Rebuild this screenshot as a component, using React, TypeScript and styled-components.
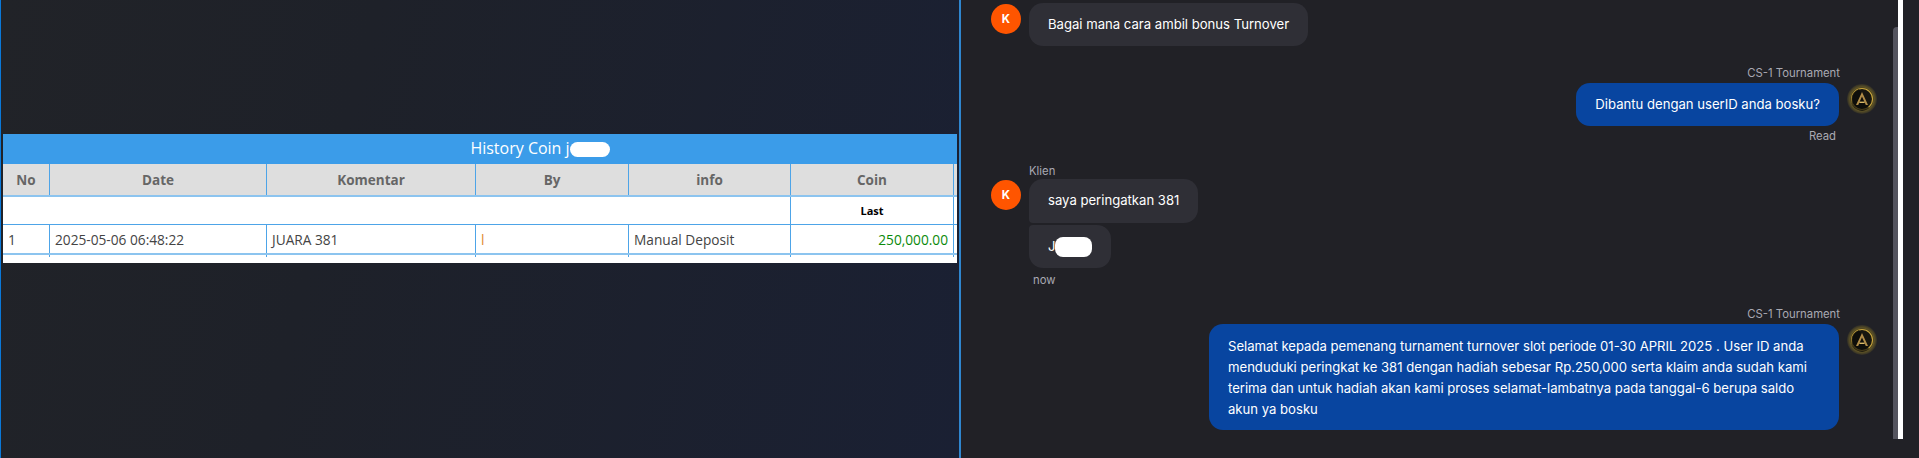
import React from "react";
import styled, { createGlobalStyle } from "styled-components";

const GlobalStyle = createGlobalStyle`
  html, body {
    margin: 0;
    padding: 0;
    background: #212126;
    overflow: hidden;
  }
  * {
    box-sizing: border-box;
  }
`;

const Page = styled.div`
  width: 1919px;
  height: 458px;
  display: flex;
`;

const LeftPane = styled.div`
  width: 961px;
  height: 458px;
  padding: 134px 3px 0 3px;
  border-left: 1px solid #0a78d8;
  border-right: 2px solid #2f86cf;
  margin: 0;
  background: linear-gradient(105deg, #212328 0%, #1e2129 35%, #1a2033 100%);
`;

const Sheet = styled.div`
  width: 954px;
  margin-left: -1px;
  height: 129px;
  background: #fff;
  font-family: "Open Sans", "Noto Sans", sans-serif;
`;

const TitleBar = styled.div`
  height: 30px;
  padding-left: 120px;
  background: #3b9ce9;
  color: #fff;
  font-size: 16px;
  line-height: 29px;
  text-align: center;
`;

const Blur = styled.span<{ $w: number; $h: number }>`
  display: inline-block;
  width: ${(p) => p.$w}px;
  height: ${(p) => p.$h}px;
  border-radius: 8px;
  background: #fff;
  vertical-align: middle;
`;

const Row = styled.div<{ $h: number; $rule?: string }>`
  display: grid;
  grid-template-columns: 46px 217px 209px 153px 162px 163px 4px;
  height: ${(p) => p.$h}px;
  border-bottom: ${(p) => p.$rule || "none"};
`;

const Cell = styled.div<{ $line?: boolean; $span?: number }>`
  grid-column: span ${(p) => p.$span || 1};
  border-left: ${(p) => (p.$line ? "1px solid #4da4e8" : "none")};
  overflow: hidden;
  white-space: nowrap;
`;

const Head = styled(Cell)`
  background: #dedede;
  color: #666;
  font-size: 13.5px;
  font-weight: 700;
  line-height: 32px;
  text-align: center;
`;

const Body = styled(Cell)<{ $align?: string; $color?: string }>`
  padding: 0 5px;
  color: ${(p) => p.$color || "#444"};
  font-size: 13.7px;
  line-height: 30px;
  text-align: ${(p) => p.$align || "left"};
`;

const LastLabel = styled(Cell)`
  color: #000;
  font-size: 11px;
  font-weight: 700;
  line-height: 27px;
  text-align: center;
`;

const ChatPane = styled.div`
  width: 932px;
  height: 458px;
  padding: 3px 16px 0 30px;
  display: flex;
  flex-direction: column;
  font-family: Inter, "Noto Sans", sans-serif;
  background: #212126;
`;

const Line = styled.div<{ $side: "in" | "out"; $top?: number }>`
  display: flex;
  gap: 8px;
  align-items: flex-start;
  justify-content: ${(p) => (p.$side === "out" ? "flex-end" : "flex-start")};
  margin-top: ${(p) => p.$top || 0}px;
`;

const Avatar = styled.div`
  flex: none;
  width: 30px;
  height: 30px;
  margin-top: 1px;
  border-radius: 50%;
  background: #ff5500;
  color: #fff;
  font-size: 11.5px;
  font-weight: 700;
  line-height: 30px;
  text-align: center;
`;

const LogoWrap = styled.div`
  flex: none;
  width: 30px;
  height: 30px;
  margin-top: 1px;
`;

const Stack = styled.div`
  display: flex;
  flex-direction: column;
  gap: 2px;
`;

const Bubble = styled.div<{ $kind: "in" | "out"; $first?: boolean; $last?: boolean }>`
  padding: 11px 19px;
  min-height: ${(p) => (p.$first ? 44 : 43)}px;
  border-radius: 14px;
  border-bottom-left-radius: ${(p) => (p.$first ? "4px" : "14px")};
  border-top-left-radius: ${(p) => (p.$last ? "4px" : "14px")};
  background: ${(p) => (p.$kind === "out" ? "#0845a0" : "#2f2f36")};
  color: #fff;
  font-size: 13.12px;
  line-height: 21px;
  width: fit-content;
`;

const WideBubble = styled(Bubble)`
  width: 630px;
  height: 106px;
  padding: 12px 19px;
  line-height: 20.8px;
`;

const Sender = styled.div<{ $side: "in" | "out"; $top: number; $h: number }>`
  margin-top: ${(p) => p.$top}px;
  height: ${(p) => p.$h}px;
  color: #a9a9b2;
  font-size: 11.3px;
  line-height: 14px;
  text-align: ${(p) => (p.$side === "out" ? "right" : "left")};
  padding: ${(p) => (p.$side === "out" ? "0 37px 0 0" : "0 0 0 38px")};
`;

const Note = styled(Sender)`
  padding: ${(p) => (p.$side === "out" ? "0 41px 0 0" : "0 0 0 42px")};
`;

const ScrollTrack = styled.div`
  flex: none;
  width: 5px;
  height: 439px;
  padding-top: 27px;
`;

const ScrollThumb = styled.div`
  height: 100%;
  background: #55555f;
  border-radius: 4px 0 0 0;
`;

const WhiteStrip = styled.div`
  flex: none;
  width: 5px;
  height: 439px;
  background: #fff;
`;

const Logo = () => (
  <svg width="30" height="30" viewBox="0 0 30 30">
    <defs>
      <radialGradient id="rim" cx="50%" cy="50%" r="50%">
        <stop offset="60%" stopColor="#0f0e0b" />
        <stop offset="80%" stopColor="#5e5326" />
        <stop offset="100%" stopColor="#2f2d26" />
      </radialGradient>
    </defs>
    <circle cx="15" cy="15" r="15" fill="url(#rim)" />
    <circle cx="15" cy="15" r="10.5" fill="#17160f" stroke="#c9a63f" strokeWidth="1.1" />
    <path d="M4.5 15 A10.5 10.5 0 0 1 12 5 L22 24 A10.5 10.5 0 0 1 4.5 15 Z" fill="#0b0b09" opacity="0.7" />
    <path d="M15 8 L21 21 H18.8 L15 12.5 L11.2 21 H9 Z" fill="#b08c48" />
    <path d="M12.4 17.6 H17.6 V19 H12.4 Z" fill="#d9b968" />
  </svg>
);

const columns = ["No", "Date", "Komentar", "By", "info", "Coin"];

const App = () => (
  <Page>
    <GlobalStyle />
    <LeftPane>
      <Sheet>
        <TitleBar>
          History Coin j<Blur $w={40} $h={15} />
        </TitleBar>
        <Row $h={33} $rule="2px solid #8cc4ef">
          {columns.map((name, i) => (
            <Head key={name} $line={i > 0}>
              {name}
            </Head>
          ))}
          <Head $line />
        </Row>
        <Row $h={28} $rule="1px solid #4da4e8">
          <Cell $span={5} />
          <LastLabel $line>Last</LastLabel>
          <Cell $line />
        </Row>
        <Row $h={30} $rule="2px solid #8cc4ef">
          <Body>1</Body>
          <Body $line>2025-05-06 06:48:22</Body>
          <Body $line>JUARA 381</Body>
          <Body $line $color="#e08a2e">
            l
          </Body>
          <Body $line>Manual Deposit</Body>
          <Body $line $align="right" $color="#0a8a0a">
            250,000.00
          </Body>
          <Cell $line />
        </Row>
        <Row $h={2}>
          <Cell />
          <Cell $line />
          <Cell $line />
          <Cell $line />
          <Cell $line />
          <Cell $line />
          <Cell $line />
        </Row>
      </Sheet>
    </LeftPane>
    <ChatPane>
      <Line $side="in">
        <Avatar>K</Avatar>
        <Bubble $kind="in">Bagai mana cara ambil bonus Turnover</Bubble>
      </Line>
      <Sender $side="out" $top={20} $h={17}>
        CS-1 Tournament
      </Sender>
      <Line $side="out">
        <Bubble $kind="out">Dibantu dengan userID anda bosku?</Bubble>
        <LogoWrap>
          <Logo />
        </LogoWrap>
      </Line>
      <Note $side="out" $top={3} $h={14}>
        Read
      </Note>
      <Sender $side="in" $top={21} $h={15}>
        Klien
      </Sender>
      <Line $side="in">
        <Avatar>K</Avatar>
        <Stack>
          <Bubble $kind="in" $first>
            saya peringatkan 381
          </Bubble>
          <Bubble $kind="in" $last>
            J<Blur $w={37} $h={20} />
          </Bubble>
        </Stack>
      </Line>
      <Note $side="in" $top={5} $h={14}>
        now
      </Note>
      <Sender $side="out" $top={20} $h={17}>
        CS-1 Tournament
      </Sender>
      <Line $side="out">
        <WideBubble $kind="out">
          Selamat kepada pemenang turnament turnover slot periode 01-30 APRIL 2025 . User ID anda
          menduduki peringkat ke 381 dengan hadiah sebesar Rp.250,000 serta klaim anda sudah kami
          terima dan untuk hadiah akan kami proses selamat-lambatnya pada tanggal-6 berupa saldo
          akun ya bosku
        </WideBubble>
        <LogoWrap>
          <Logo />
        </LogoWrap>
      </Line>
    </ChatPane>
    <ScrollTrack>
      <ScrollThumb />
    </ScrollTrack>
    <WhiteStrip />
  </Page>
);

export default App;
